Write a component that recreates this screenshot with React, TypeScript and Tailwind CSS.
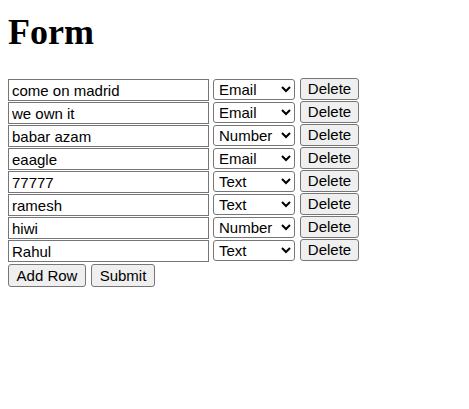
import React, {useState} from 'react';

type Row = { value: string; type: string };

const initialRows: Row[] = [
    {value: "come on madrid", type: "email"},
    {value: "we own it", type: "email"},
    {value: "babar azam", type: "number"},
    {value: "eaagle", type: "email"},
    {value: "77777", type: "text"},
    {value: "ramesh", type: "text"},
    {value: "hiwi", type: "number"},
    {value: "Rahul", type: "text"},
];

const App = () => {
    const [rows, setRows] = useState<Row[]>(initialRows);

    const handleInput = (e, index) => {
        const {name, value} = e.target;
        const data = [...rows];
        data[index] = {...data[index], [name]: value};
        setRows(data);
    }

    const deleteRow = (index) => {
        setRows(rows.filter((_, i) => i !== index));
    }

    const addRow = () => {
        setRows([...rows, {value: "", type: "text"}]);
    }

    const handleSubmit = (e) => {
        e.preventDefault();
        console.log(rows);
    }

    return (
        <div className="p-2 bg-white min-h-[409px] text-black font-['Liberation_Sans',Arial,sans-serif]">
            <h1 className="mt-[4px] mb-[25px] text-[36px] leading-[41px] font-bold font-['Liberation_Serif','Times_New_Roman',serif]">
                Form
            </h1>
            <form onSubmit={handleSubmit}>
                {rows.map((item, idx) => (
                    <div key={idx} className="flex items-start h-[23px]">
                        <input value={item.value} name="value" onChange={(e) => handleInput(e, idx)}
                               className="mt-[1px] w-[201px] h-[22px] border border-[#767676] px-[3px] text-[15px] leading-[20px] outline-none"
                               type="text"/>
                        <select value={item.type} name="type" onChange={(e) => handleInput(e, idx)}
                                className="mt-[1px] ml-[4px] w-[82px] h-[21px] border border-[#767676] rounded-[3px] bg-white text-[15px] pl-[1px]">
                            <option value="text">Text</option>
                            <option value="email">Email</option>
                            <option value="number">Number</option>
                        </select>
                        <button type="button" onClick={() => deleteRow(idx)}
                                className="ml-[5px] w-[59px] h-[22px] border border-[#767676] rounded-[3px] bg-[#efefef] text-[15px] leading-[20px]">
                            Delete
                        </button>
                    </div>
                ))}
                <div className="flex items-start gap-[5px] mt-[2px]">
                    <button type="button" onClick={addRow}
                            className="w-[78px] h-[23px] border border-[#767676] rounded-[3px] bg-[#efefef] text-[15px] leading-[21px]">
                        Add Row
                    </button>
                    <button type="submit"
                            className="w-[64px] h-[23px] border border-[#767676] rounded-[3px] bg-[#efefef] text-[15px] leading-[21px]">
                        Submit
                    </button>
                </div>
            </form>
        </div>
    );
};

export default App;
